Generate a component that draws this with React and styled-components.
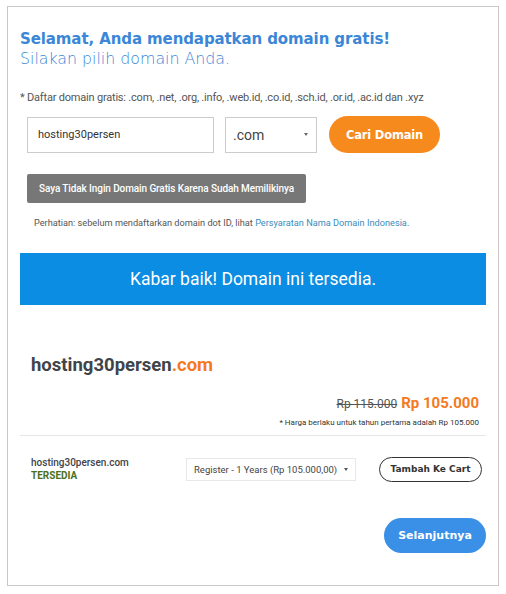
import React from 'react'
import styled, { createGlobalStyle } from 'styled-components'

const Global = createGlobalStyle`
  body {
    margin: 0;
    background: #fff;
    font-family: Roboto, "Liberation Sans", sans-serif;
  }
`

const Page = styled.div`
  padding: 6px 7px 8px 7px;
`

const Card = styled.div`
  border: 1px solid #c8c8c8;
  height: 580px;
  box-sizing: border-box;
  padding: 22px 12px 0 12px;
`

const Title = styled.h1`
  margin: 0;
  font-family: "DejaVu Sans", sans-serif;
  font-weight: bold;
  font-size: 15px;
  line-height: 20px;
  color: #3b86d6;
  letter-spacing: -0.1px;
`

const Subtitle = styled.h2`
  margin: 0;
  font-family: "DejaVu Sans", sans-serif;
  font-weight: 300;
  font-size: 15.8px;
  line-height: 20px;
  color: #3b86d6;
`

const Note = styled.p`
  margin: 22px 0 0 0;
  font-size: 11px;
  color: #555;
  letter-spacing: -0.2px;
`

const SearchRow = styled.div`
  display: flex;
  align-items: center;
  margin: 12px 0 0 7px;
`

const DomainInput = styled.div`
  width: 187px;
  height: 36px;
  box-sizing: border-box;
  border: 1px solid #ccc;
  padding: 0 10px;
  display: flex;
  align-items: center;
  font-size: 11px;
  color: #333;
`

const TldSelect = styled.div`
  margin-left: 11px;
  width: 92px;
  height: 36px;
  box-sizing: border-box;
  border: 1px solid #ccc;
  padding: 0 8px 0 7px;
  display: flex;
  align-items: center;
  justify-content: space-between;
  font-size: 14px;
  color: #444;
`

const Caret = styled.span`
  width: 0;
  height: 0;
  border-left: 2.5px solid transparent;
  border-right: 2.5px solid transparent;
  border-top: 3px solid ${p => p.$color || '#666'};
`

const Pill = styled.button`
  border: none;
  border-radius: 20px;
  font-family: "DejaVu Sans", sans-serif;
  font-weight: bold;
  color: #fff;
  cursor: pointer;
`

const SearchButton = styled(Pill)`
  margin-left: 12px;
  width: 111px;
  height: 37px;
  background: #f78a1c;
  font-size: 11.5px;
  letter-spacing: -0.2px;
`

const SkipButton = styled.button`
  margin: 21px 0 0 7px;
  height: 29px;
  padding: 0 12px;
  border: none;
  border-radius: 2px;
  background: #777;
  color: #fff;
  font-family: Roboto, sans-serif;
  font-weight: 500;
  font-size: 10px;
  letter-spacing: -0.1px;
`

const Warning = styled.p`
  margin: 14px 0 0 14px;
  font-size: 9.2px;
  color: #555;
  a {
    color: #3c8dbc;
    text-decoration: none;
  }
`

const Banner = styled.div`
  margin-top: 25px;
  height: 52px;
  background: #0a8de2;
  color: #fff;
  display: flex;
  align-items: center;
  justify-content: center;
  font-size: 17.5px;
  font-weight: 400;
`

const DomainName = styled.div`
  margin: 49px 0 0 11px;
  font-size: 18.5px;
  font-weight: bold;
  color: #3f4449;
  span {
    color: #f47a22;
  }
`

const PriceRow = styled.div`
  margin: 18px 7px 0 0;
  display: flex;
  justify-content: flex-end;
  align-items: baseline;
  gap: 4px;
`

const OldPrice = styled.s`
  font-size: 12px;
  color: #555;
`

const NewPrice = styled.span`
  font-size: 15px;
  font-weight: bold;
  color: #f47a22;
`

const PriceNote = styled.div`
  margin: 6px 7px 0 0;
  text-align: right;
  font-size: 8px;
  color: #333;
`

const Divider = styled.hr`
  margin: 8px 0 0 0;
  border: none;
  border-top: 1px solid #e6e6e6;
`

const ResultRow = styled.div`
  display: flex;
  align-items: center;
  padding: 20px 4px 0 11px;
`

const ResultInfo = styled.div`
  width: 155px;
  flex-shrink: 0;
  font-size: 10px;
  font-weight: 500;
  color: #3f4449;
  line-height: 13px;
`

const Status = styled.div`
  color: #4a701c;
  font-weight: bold;
`

const PeriodSelect = styled.div`
  height: 23px;
  width: 170px;
  flex-shrink: 0;
  box-sizing: border-box;
  border: 1px solid #e8e8e8;
  display: flex;
  align-items: center;
  gap: 7px;
  padding: 0 7px;
  white-space: nowrap;
  font-size: 9.5px;
  color: #444;
`

const CartButton = styled(Pill)`
  margin-left: auto;
  height: 25px;
  width: 103px;
  background: #fff;
  border: 1px solid #333;
  color: #333;
  font-size: 9px;
`

const Footer = styled.div`
  display: flex;
  justify-content: flex-end;
  margin-top: 36px;
`

const NextButton = styled(Pill)`
  width: 102px;
  height: 35px;
  background: #3a8fe6;
  font-size: 11px;
`

export default function App() {
  return (
    <Page>
      <Global />
      <Card>
        <Title>Selamat, Anda mendapatkan domain gratis!</Title>
        <Subtitle>Silakan pilih domain Anda.</Subtitle>
        <Note>* Daftar domain gratis: .com, .net, .org, .info, .web.id, .co.id, .sch.id, .or.id, .ac.id dan .xyz</Note>
        <SearchRow>
          <DomainInput>hosting30persen</DomainInput>
          <TldSelect>.com<Caret /></TldSelect>
          <SearchButton>Cari Domain</SearchButton>
        </SearchRow>
        <SkipButton>Saya Tidak Ingin Domain Gratis Karena Sudah Memilikinya</SkipButton>
        <Warning>
          Perhatian: sebelum mendaftarkan domain dot ID, lihat <a href="#">Persyaratan Nama Domain Indonesia</a>.
        </Warning>
        <Banner>Kabar baik! Domain ini tersedia.</Banner>
        <DomainName>hosting30persen<span>.com</span></DomainName>
        <PriceRow>
          <OldPrice>Rp 115.000</OldPrice>
          <NewPrice>Rp 105.000</NewPrice>
        </PriceRow>
        <PriceNote>* Harga berlaku untuk tahun pertama adalah Rp 105.000</PriceNote>
        <Divider />
        <ResultRow>
          <ResultInfo>
            hosting30persen.com
            <Status>TERSEDIA</Status>
          </ResultInfo>
          <PeriodSelect>Register - 1 Years (Rp 105.000,00)<Caret $color="#555" /></PeriodSelect>
          <CartButton>Tambah Ke Cart</CartButton>
        </ResultRow>
        <Footer>
          <NextButton>Selanjutnya</NextButton>
        </Footer>
      </Card>
    </Page>
  )
}
